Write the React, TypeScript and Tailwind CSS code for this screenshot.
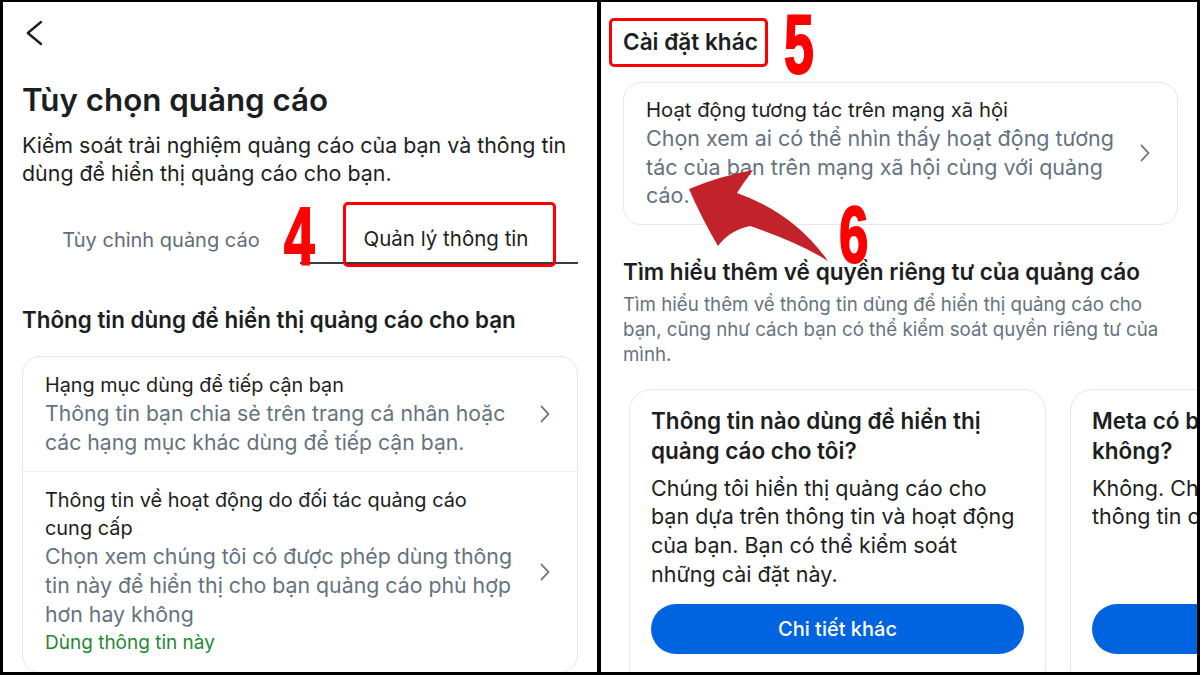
import React from "react";

const font = "font-['Inter','Noto_Sans',sans-serif]";

function Chevron() {
  return (
    <svg width="10" height="18" viewBox="0 0 10 18" className="shrink-0">
      <path d="M1.5 1.5 L8.5 9 L1.5 16.5" fill="none" stroke="#5f6d7c" strokeWidth="1.8" strokeLinecap="round" strokeLinejoin="round" />
    </svg>
  );
}

function LeftPanel() {
  return (
    <div className="w-[594px] shrink-0 bg-white overflow-hidden px-[19px] text-[#1c1e21]">
      {/* back */}
      <div className="mt-[16px] ml-[4px]">
        <svg width="18" height="28" viewBox="0 0 18 28">
          <path d="M15 4 L1.8 15 L15 26" fill="none" stroke="#1c1e21" strokeWidth="2.4" strokeLinecap="round" strokeLinejoin="round" />
        </svg>
      </div>

      <h1 className="mt-[36px] text-[31.3px] leading-[36px] font-semibold">Tùy chọn quảng cáo</h1>
      <p className="mt-[13px] text-[21.4px] leading-[28px] whitespace-nowrap">
        Kiểm soát trải nghiệm quảng cáo của bạn và thông tin
        <br />
        dùng để hiển thị quảng cáo cho bạn.
      </p>

      {/* tabs */}
      <div className="mt-[29px] grid grid-cols-2">
        <div className="h-[48px] flex items-center justify-center text-[20px] text-[#5f6d7c]">
          Tùy chỉnh quảng cáo
        </div>
        <div className="h-[48px] flex items-center justify-center text-[20.5px] border-b-2 border-[#3a3b3c]">
          <span className="ml-[14px]">Quản lý thông tin</span>
        </div>
      </div>

      <h2 className="mt-[42px] text-[22.4px] leading-[28px] font-semibold whitespace-nowrap">
        Thông tin dùng để hiển thị quảng cáo cho bạn
      </h2>

      <div className="mt-[22px] rounded-[18px] border border-[#e4e6eb]">
        <div className="flex items-center pl-[22px] pr-[27px] pt-[14px] pb-[14px]">
          <div className="flex-1 whitespace-nowrap">
            <div className="text-[19.8px] leading-[28px]">Hạng mục dùng để tiếp cận bạn</div>
            <div className="text-[21.2px] leading-[29px] text-[#65727f]">
              Thông tin bạn chia sẻ trên trang cá nhân hoặc
              <br />
              các hạng mục khác dùng để tiếp cận bạn.
            </div>
          </div>
          <Chevron />
        </div>
        <div className="border-t border-[#eceef1] flex items-center pl-[22px] pr-[27px] pt-[14px] pb-[15px]">
          <div className="flex-1 whitespace-nowrap">
            <div className="text-[19.9px] leading-[28px]">
              Thông tin về hoạt động do đối tác quảng cáo
              <br />
              cung cấp
            </div>
            <div className="text-[21.3px] leading-[29px] text-[#65727f]">
              Chọn xem chúng tôi có được phép dùng thông
              <br />
              tin này để hiển thị cho bạn quảng cáo phù hợp
              <br />
              hơn hay không
            </div>
            <div className="text-[19px] leading-[28px] text-[#1e8a34]">Dùng thông tin này</div>
          </div>
          <Chevron />
        </div>
      </div>
    </div>
  );
}

function InfoCard({ title, body }: { title: React.ReactNode; body: React.ReactNode }) {
  return (
    <div className="w-[417px] h-[300px] shrink-0 rounded-[22px] border border-[#e4e6eb] px-[21px] pt-[16px] flex flex-col">
      <div className="text-[22.5px] leading-[30px] font-semibold whitespace-nowrap overflow-hidden">{title}</div>
      <div className="mt-[8px] h-[115px] text-[21.5px] leading-[28.7px] whitespace-nowrap overflow-hidden">{body}</div>
      <button className="mt-[15px] h-[50px] w-full rounded-full bg-[#0064e0] text-white text-[20px] font-medium">
        Chi tiết khác
      </button>
    </div>
  );
}

function RightPanel() {
  return (
    <div className="flex-1 bg-white overflow-hidden pl-[22px] text-[#1c1e21]">
      <div className="mt-[16px] -ml-[14px] w-fit h-[49px] border-[3px] border-[#ff0000] rounded-[5px] pl-[11px] pr-[7px] flex items-center">
        <span className="text-[22.6px] font-semibold leading-none">Cài đặt khác</span>
      </div>

      <div className="mt-[15px] w-[555px] rounded-[18px] border border-[#e4e6eb] flex items-center pl-[22px] pr-[27px] pt-[13px] pb-[14px]">
        <div className="flex-1 whitespace-nowrap">
          <div className="text-[20.3px] leading-[28px]">Hoạt động tương tác trên mạng xã hội</div>
          <div className="text-[21.5px] leading-[28.5px] text-[#65727f]">
            Chọn xem ai có thể nhìn thấy hoạt động tương
            <br />
            tác của bạn trên mạng xã hội cùng với quảng
            <br />
            cáo.
          </div>
        </div>
        <Chevron />
      </div>

      <h2 className="mt-[33px] text-[22.6px] leading-[28px] font-semibold whitespace-nowrap">
        Tìm hiểu thêm về quyền riêng tư của quảng cáo
      </h2>
      <p className="mt-[6px] text-[18.7px] leading-[25px] text-[#65727f] whitespace-nowrap">
        Tìm hiểu thêm về thông tin dùng để hiển thị quảng cáo cho
        <br />
        bạn, cũng như cách bạn có thể kiểm soát quyền riêng tư của
        <br />
        mình.
      </p>

      <div className="mt-[22px] ml-[6px] flex gap-[24px]">
        <InfoCard
          title={
            <>
              Thông tin nào dùng để hiển thị
              <br />
              quảng cáo cho tôi?
            </>
          }
          body={
            <>
              Chúng tôi hiển thị quảng cáo cho
              <br />
              bạn dựa trên thông tin và hoạt động
              <br />
              của bạn. Bạn có thể kiểm soát
              <br />
              những cài đặt này.
            </>
          }
        />
        <InfoCard
          title={
            <>
              Meta có bán thông tin của tôi
              <br />
              không?
            </>
          }
          body={
            <>
              Không. Chúng tôi không bán
              <br />
              thông tin cá nhân của bạn.
            </>
          }
        />
      </div>
    </div>
  );
}

export default function App() {
  return (
    <div className={`${font} relative w-[1200px] h-[675px] bg-black flex gap-[4px] pt-[2px] pb-[3px] px-[3px] overflow-hidden`}>
      <LeftPanel />
      <RightPanel />

      {/* annotations */}
      <div className="absolute left-[343px] top-[202px] w-[213px] h-[65px] border-[3px] border-[#ff0000] rounded-[5px] pointer-events-none" />

      <div className="absolute left-[284px] top-[196px] font-['Liberation_Sans',sans-serif] font-bold text-[81px] leading-none text-[#ff0000] origin-left scale-x-[0.68] [-webkit-text-stroke:2px_#ff0000] pointer-events-none">
        4
      </div>
      <div className="absolute left-[784px] top-[2px] font-['Liberation_Sans',sans-serif] font-bold text-[84px] leading-none text-[#ff0000] origin-left scale-x-[0.64] [-webkit-text-stroke:2px_#ff0000] pointer-events-none">
        5
      </div>
      <div className="absolute left-[839px] top-[195px] font-['Liberation_Sans',sans-serif] font-bold text-[80px] leading-none text-[#ff0000] origin-left scale-x-[0.66] [-webkit-text-stroke:2px_#ff0000] pointer-events-none">
        6
      </div>

      <svg className="absolute left-0 top-0 pointer-events-none" width="1200" height="675" viewBox="0 0 1200 675">
        <path
          d="M 689 189 Q 720 176 753 170 Q 744 182 737 193 Q 794 213 828 261 Q 800 243 750 226 Q 730 230 718 246 Q 701 217 689 189 Z"
          fill="#c2232a"
        />
      </svg>
    </div>
  );
}
